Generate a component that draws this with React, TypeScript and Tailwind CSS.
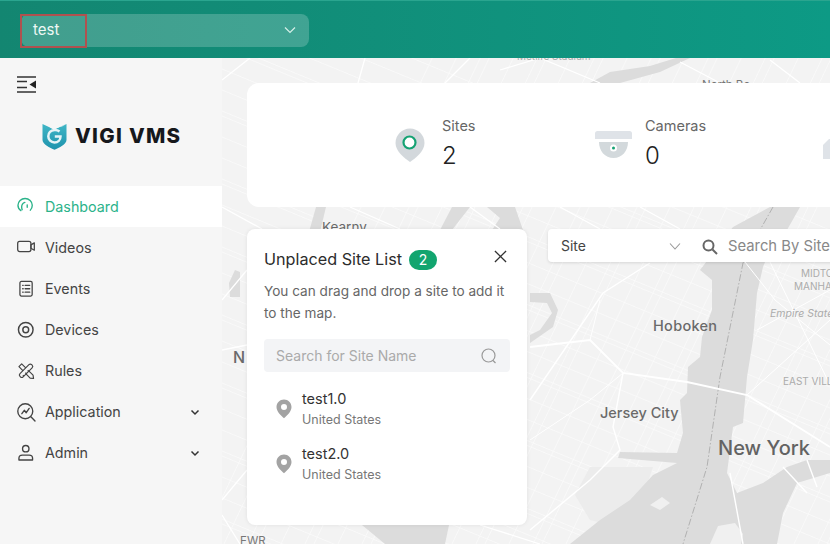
import React from "react";

const Pin = ({ className = "" }: { className?: string }) => (
  <svg className={className} width="16" height="20" viewBox="0 0 16 20">
    <path fillRule="evenodd" fill="#a3a3a3" d="M8 0.5C3.8 0.5 0.5 3.8 0.5 8c0 4.6 4.6 8.800 7.500 11.200 2.900-2.400 7.500-6.600 7.500-11.200C15.500 3.800 12.200 0.5 8 0.5zM8 5a3 3 0 1 1 0 6 3 3 0 0 1 0-6z" />
  </svg>
);

const Chevron = () => (
  <svg width="12" height="12" viewBox="0 0 12 12" fill="none" stroke="#333" strokeWidth="1.5" className="ml-auto mr-[21px]">
    <path d="M2.500 4.500 6 8l3.500-3.500" />
  </svg>
);

const icons: Record<string, React.ReactNode> = {
  Dashboard: (
    <g fill="none" stroke="#2bb38a" strokeWidth="1.4" strokeLinecap="round" transform="translate(0 -1.500)">
      <path d="M4 14.500C2 13.200 1 11.200 1 9 1 5.200 4.300 2 8.300 2s7.400 3.200 7.400 7c0 2-.8 3.700-2 5" />
      <path d="M5.300 13.500C5 12.700 4.800 11.800 4.800 10.800c0-2.300 1.300-4.200 3.300-4.800" />
      <path d="M10.500 8.500v2.500" />
    </g>
  ),
  Videos: (
    <g fill="none" stroke="#444" strokeWidth="1.3" strokeLinejoin="round" transform="translate(0 -1.500)">
      <rect x="0.700" y="4" width="13.600" height="10.400" rx="2" />
      <path d="M14.300 7.500 17.800 5.500V13L14.300 11z" />
    </g>
  ),
  Events: (
    <g fill="none" stroke="#444" strokeWidth="1.3" strokeLinecap="round">
      <rect x="3" y="1.500" width="12.600" height="15" rx="1.500" />
      <path d="M5.800 5.500h.6M8.300 5.500h4.800M5.800 9h.6M8.300 9h4.800M5.800 12.500h.6M8.300 12.500h4.800" />
    </g>
  ),
  Devices: (
    <g fill="none" stroke="#444" strokeWidth="1.5">
      <circle cx="9" cy="9" r="7.500" />
      <circle cx="9" cy="9" r="3" />
    </g>
  ),
  Rules: (
    <g fill="none" stroke="#444" strokeWidth="1.2" strokeLinejoin="round">
      <path d="M2 4.800 4.800 2 16.500 13.500 17 17 13.500 16.500z" />
      <rect x="-2.300" y="-8.500" width="4.600" height="17" rx="2" transform="translate(9.300 9) rotate(45)" fill="#f6f6f6" />
      <path d="M6 14.500 7 13.500M8.500 12 9.500 11M11 9.500 12 8.500" />
    </g>
  ),
  Application: (
    <g fill="none" stroke="#444" strokeWidth="1.4" strokeLinecap="round" strokeLinejoin="round">
      <circle cx="8.500" cy="8.500" r="7.700" />
      <path d="M14.500 14.300 18.500 18.500" />
      <path d="M5 11 7.500 7.500 9.500 10 12.500 5.500" />
    </g>
  ),
  Admin: (
    <g fill="none" stroke="#444" strokeWidth="1.4">
      <circle cx="9" cy="4.800" r="3.300" />
      <path d="M2 16.500v-1.800c0-2 1.500-3.200 3.500-3.200h7c2 0 3.500 1.200 3.500 3.200v1.800z" strokeLinejoin="round" />
    </g>
  ),
};

const nav = ["Dashboard", "Videos", "Events", "Devices", "Rules", "Application", "Admin"];

const streetsA = Array.from({ length: 44 }, (_, i) => {
  const x = 200 + i * 19 + (i % 3) * 5;
  return `M${x} 544L${x + 260} 0`;
}).join("");
const streetsB = Array.from({ length: 34 }, (_, i) => {
  const y = 40 + i * 17 + (i % 4) * 4;
  return `M222 ${y - 60}L830 ${y + 190}`;
}).join("");

const MapBg = () => (
  <svg className="absolute inset-0" width="608" height="486" viewBox="222 58 608 486" fontFamily="Inter, sans-serif">
    <rect x="222" y="58" width="608" height="486" fill="#f3f3f3" />
    <path d={streetsA} stroke="#fafafa" strokeWidth="0.8" fill="none" />
    <path d={streetsB} stroke="#fafafa" strokeWidth="0.8" fill="none" />
    <path d="M590 467H653L640 505 610 525 590 520 575 495z" fill="#ececec" />
    {/* water */}
    <g fill="#dcdcdc">
      <path d="M700 270 712 280 712 310 702 337 700 357 688 367 687 393 680 400 683 433 677 453 620 452 618 458 677 463 653 475 630 500 600 520 570 544H777L783 513 797 483 830 473V460H807L787 467 763 483 737 493 727 473 733 427 743 423 747 377 753 340 757 293 763 267 772 245 787 230 800 207H770L733 227z" />
      <path d="M530 293H550L558 310 553 327 530 343V335L540 330 552 313 547 303 530 302z" />
      <path d="M452 207H470L452 230H440z" />
      <path d="M487 207H515L523 230H492L500 218z" />
      <path d="M316 207H326L320 232H309z" />
      <path d="M590 83H620L660 72 690 58H676L650 66 610 72z" />
      <path d="M229 283 235 270 240 272 240 297 230 297z" />
      <path d="M362 525H449L445 544H385z" />
    </g>
    <g fill="#f0f0f0">
      <path d="M710 544 718 526 735 523 743 534 741 544z" />
      <path d="M650 505 662 497 670 503 660 510z" />
    </g>
    <path d="M773 207 760 230 743 263 720 377 707 467 683 544" stroke="#ababab" strokeWidth="0.9" strokeDasharray="7 2 1.500 2" fill="none" />
    {/* roads */}
    <g stroke="#ffffff" fill="none">
      <path d="M530 347 590 340 623 373 687 382 747 395 830 447" strokeWidth="1.800" />
      <path d="M530 400 603 293 650 263M623 373 613 427 620 450 590 480 530 530M730 473 743 544M783 467 807 493M807 460 817 487" strokeWidth="1.400" />
      <path d="M530 440 590 400 623 373M590 340 600 300M745 262 775 300 830 345M757 330 830 290M747 395 830 320M770 262 830 385" strokeWidth="1" />
      <path d="M222 80 250 58M365 58 358 83M470 58 445 83M500 70 540 58M540 58 600 83M680 62 720 83M770 60 800 83M560 207 600 229M640 207 680 229M470 207 500 229M222 207 262 229M350 207 400 229" strokeWidth="1.300" />
      <path d="M222 300 247 270M222 350 247 345M222 500 247 470M222 515 240 544M480 525 540 544" strokeWidth="1.300" />
    </g>
    <g fill="#6a6a6a">
      <text x="653" y="331" fontSize="14.500" fontWeight="500" letterSpacing="0.300">Hoboken</text>
      <text x="600" y="418" fontSize="14.500" fontWeight="500">Jersey City</text>
      <text x="718" y="455" fontSize="20" fontWeight="500" fill="#636363">New York</text>
      <text x="233" y="363" fontSize="16" fontWeight="500">N</text>
      <text x="322" y="232" fontSize="13.500" fontWeight="400">Kearny</text>
      <text x="240" y="545" fontSize="11.500" fontWeight="400" fill="#777">EWR</text>
    </g>
    <g fill="#ababab" fontSize="10">
      <text x="801" y="277">MIDTOWN</text>
      <text x="794" y="290">MANHATTAN</text>
      <text x="770" y="317" fontStyle="italic" fontSize="10.500">Empire State</text>
      <text x="783" y="385">EAST VILLAGE</text>
      <text x="517" y="60">Metlife Stadium</text>
      <text x="702" y="89" fontSize="11.500" fill="#777">North Be</text>
    </g>
  </svg>
);

export default function App() {
  return (
    <div className="w-[830px] h-[544px] overflow-hidden flex flex-col bg-white font-['Inter',sans-serif]">
      <header className="h-[58px] shrink-0 flex items-center pl-[21px] pt-[1px] bg-gradient-to-r from-[#138671] to-[#0d9a85] border-t border-[#2aa58f]">
        <div className="relative w-[288px] h-[33px] rounded-lg bg-white/20 flex items-center pl-3 text-[#eef8f5] text-[15px]">
          <span className="pt-[1px]">test</span>
          <svg className="ml-auto mr-[13px]" width="12" height="12" viewBox="0 0 12 12" fill="none" stroke="#d5efe8" strokeWidth="1.200">
            <path d="M1 3.500 6 8.500 11 3.500" />
          </svg>
          <div className="absolute -left-px top-0 w-[67px] h-[34px] border-2 border-[#b0514f]" />
        </div>
      </header>
      <div className="flex flex-1 min-h-0">
        <aside className="w-[222px] shrink-0 bg-[#f6f6f6]">
          <div className="pl-[17px] pt-[18px]">
            <svg className="block" width="19" height="17" viewBox="0 0 19 17" fill="none" stroke="#333" strokeWidth="1.300">
              <path d="M0 1h19M0 5.500h10M0 11.500h10M0 16h19" />
              <path d="M19 4.500v8L12.500 8.500z" fill="#222" stroke="none" />
            </svg>
          </div>
          <div className="flex items-center pl-[42px] mt-[29px] gap-[8px] h-[29px]">
            <svg width="25" height="27" viewBox="0 0 25 27">
              <defs>
                <linearGradient id="sh" x1="0" y1="0" x2="0" y2="1">
                  <stop offset="0" stopColor="#3fb6c6" />
                  <stop offset="1" stopColor="#1f93ad" />
                </linearGradient>
              </defs>
              <path d="M0.500 1 8 4.500 12 6.500 24.500 1V17C24.500 21 17 25 12.500 26.800 8 25 0.500 21 0.500 17z" fill="url(#sh)" />
              <path d="M8 4.500 12 1.500 20 3.500 24.500 1 12 6.500z" fill="#f6f6f6" />
              <path d="M17.500 8.500C16.300 7.500 14.500 6.800 12.500 7 8.800 7.300 6.300 9.800 6.300 13.300S9 19.500 12.500 19.500C15.800 19.500 18.500 17.300 18.500 13.500H12.800" fill="none" stroke="#e6f4f7" strokeWidth="2.500" />
            </svg>
            <span className="font-extrabold text-[20.5px] tracking-[1.3px] text-[#16181c] leading-none">VIGI VMS</span>
          </div>
          <nav className="mt-[35px]">
            {nav.map((n) => (
              <div key={n} className={`h-[41.1px] flex items-center pl-[17px] text-[14.3px] ${n === "Dashboard" ? "bg-white text-[#2bb38a]" : "text-[#444]"}`}>
                <svg width="18" height="18" viewBox="0 0 18.500 18.500" className="shrink-0 mr-[10px] overflow-visible">{icons[n]}</svg>
                <span>{n}</span>
                {(n === "Application" || n === "Admin") && <Chevron />}
              </div>
            ))}
          </nav>
        </aside>
        <main className="relative flex-1 min-w-0 overflow-hidden">
          <MapBg />
          <div className="relative pl-[25px] pt-[25px]">
            <section className="w-[640px] h-[124px] bg-white rounded-l-xl flex items-center">
              <svg className="ml-[148px]" width="30" height="34" viewBox="0 0 30 34">
                <path d="M15 0.500C7 0.500 0.500 7 0.500 15c0 8 8.500 15 14.500 19 6-4 14.500-11 14.500-19C29.500 7 23 0.500 15 0.500z" fill="#d3d8dc" />
                <circle cx="14.500" cy="14.500" r="6" fill="#fff" stroke="#15a273" strokeWidth="2.200" />
              </svg>
              <div className="ml-[17px] w-[153px] pt-[2px]">
                <div className="text-[14.5px] text-[#666] leading-[19px]">Sites</div>
                <div className="text-[24px] font-light text-[#222] leading-[41px]">2</div>
              </div>
              <svg width="37" height="30" viewBox="0 0 37 30">
                <path d="M0 3.500Q0 1 2.500 1H34.500Q37 1 37 3.500V9H0z" fill="#dfe3e8" />
                <path d="M4 12H33C33 21 27 28 18.500 28 10 28 4 21 4 12z" fill="#d3d9dc" />
                <circle cx="18.500" cy="18" r="3.500" fill="#fff" />
                <circle cx="18.500" cy="18" r="1.500" fill="#15a273" />
              </svg>
              <div className="ml-[13px] w-[178px] pt-[2px]">
                <div className="text-[14.5px] text-[#666] leading-[19px]">Cameras</div>
                <div className="text-[24px] font-light text-[#222] leading-[41px]">0</div>
              </div>
              <svg className="mt-[7px]" width="30" height="20" viewBox="0 0 30 20">
                <path d="M0 6 6 0H30V20H0z" fill="#dfe3e8" />
              </svg>
            </section>
            <div className="flex items-start mt-[22px] gap-[21px]">
              <section className="w-[280px] h-[296px] shrink-0 bg-white rounded-lg shadow-[0_0_4px_rgba(0,0,0,0.08)] px-[17px] pt-[19px]">
                <div className="flex items-center h-[23px]">
                  <span className="text-[16.2px] text-[#2c2c2c]">Unplaced Site List</span>
                  <span className="ml-[7px] w-[28px] h-[20px] rounded-full bg-[#12a56f] text-white text-[14px] flex items-center justify-center">2</span>
                  <svg className="ml-auto mr-[3px] -mt-[7px]" width="13" height="13" viewBox="0 0 14 14" stroke="#333" strokeWidth="1.400">
                    <path d="M1 1 13 13M13 1 1 13" />
                  </svg>
                </div>
                <p className="mt-[9px] text-[13.6px] leading-[22px] text-[#666]">You can drag and drop a site to add it to the map.</p>
                <div className="mt-[15px] w-[246px] h-[33px] rounded bg-[#f3f4f6] flex items-center pl-3 pr-[13px] text-[14px] text-[#aaa]">
                  <span>Search for Site Name</span>
                  <svg className="ml-auto" width="16" height="16" viewBox="0 0 16 16" fill="none" stroke="#999" strokeWidth="1.200">
                    <circle cx="7.500" cy="7.500" r="6.500" />
                    <path d="M12 12.500 14.500 15" />
                  </svg>
                </div>
                <div className="mt-[16px] flex flex-col gap-[12.5px]">
                  {["test1.0", "test2.0"].map((t) => (
                    <div key={t} className="flex items-center pl-[12px] h-[42px]">
                      <Pin className="shrink-0" />
                      <div className="ml-[10px]">
                        <div className="text-[14.5px] leading-[21px] text-[#333]">{t}</div>
                        <div className="text-[12.5px] leading-[21px] text-[#777]">United States</div>
                      </div>
                    </div>
                  ))}
                </div>
              </section>
              <div className="w-[320px] h-[33px] shrink-0 bg-white rounded shadow-[0_1px_3px_rgba(0,0,0,0.12)] flex items-center pl-[13px] text-[14px] text-[#444]">
                <span>Site</span>
                <svg className="ml-[83px]" width="12" height="12" viewBox="0 0 12 12" fill="none" stroke="#999" strokeWidth="1.100">
                  <path d="M1 3.500 6 9 11 3.500" />
                </svg>
                <svg className="ml-[21px] mt-[3px]" width="16" height="16" viewBox="0 0 16 16" fill="none" stroke="#666" strokeWidth="2">
                  <circle cx="6.500" cy="6.500" r="5" />
                  <path d="M10.500 10.500 15 15" />
                </svg>
                <span className="ml-[10px] pt-[1px] text-[14.8px] text-[#888] whitespace-nowrap">Search By Site</span>
              </div>
            </div>
          </div>
        </main>
      </div>
    </div>
  );
}
